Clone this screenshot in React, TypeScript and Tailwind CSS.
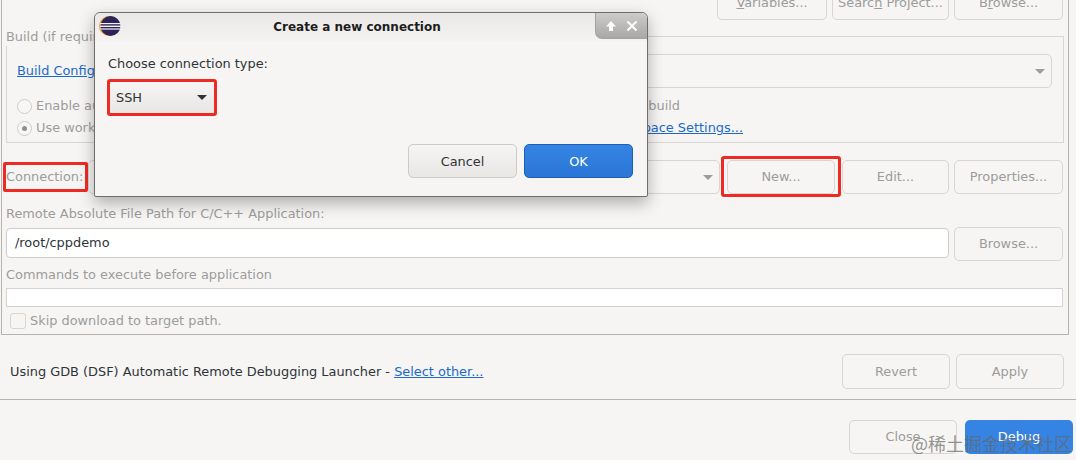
import React from "react";

// Disabled GTK style button from the launch configuration page
function Btn({ children, className = "" }: { children: React.ReactNode; className?: string }) {
  return (
    <div className={`relative flex items-center justify-center rounded-[5px] border border-[#d8d6d2] bg-[#f6f5f4] text-[#9c9c9a] ${className}`}>
      {children}
    </div>
  );
}

function Radio({ checked, label }: { checked?: boolean; label: string }) {
  return (
    <div className="flex h-[22px] items-center gap-[4px] text-[#9c9c9a]">
      <div className="flex h-[15px] w-[15px] items-center justify-center rounded-full border border-[#cfcdc9] bg-[#f8f7f6]">
        {checked && <div className="h-[5px] w-[5px] rounded-full bg-[#8f8f8d]" />}
      </div>
      <span>{label}</span>
    </div>
  );
}

function Caret({ className = "" }: { className?: string }) {
  return (
    <svg width="10" height="5" viewBox="0 0 10 5" className={className}>
      <path d="M0 0h10L5 5z" fill="currentColor" />
    </svg>
  );
}

function EclipseLogo() {
  return (
    <svg width="24" height="24" viewBox="0 0 24 24">
      <circle cx="11" cy="12" r="10" fill="#f0a04a" />
      <circle cx="12.5" cy="12" r="10" fill="#2c2358" />
      <rect x="2" y="9" width="21" height="1.2" fill="#f2f1f6" />
      <rect x="2" y="11.6" width="21" height="1.4" fill="#f2f1f6" />
      <rect x="2.5" y="14.4" width="20" height="1.2" fill="#f2f1f6" />
    </svg>
  );
}

function Dialog() {
  return (
    <div className="absolute left-[94px] top-[12px] flex h-[185px] w-[554px] flex-col rounded-t-[6px] rounded-b-[2px] border border-[#6e6e6c] bg-[#f6f5f4] shadow-[0_6px_16px_rgba(0,0,0,0.3)]">
      <div className="relative flex h-[28px] items-center justify-center rounded-t-[6px] bg-gradient-to-b from-[#e9e8e6] to-[#f4f3f1]">
        <div className="absolute left-[3px] top-[1px]">
          <EclipseLogo />
        </div>
        <span className="ml-[-28px] text-[12px] font-bold text-[#1d1d1d]">Create a new connection</span>
        <div className="absolute right-0 top-0 flex h-[26px] w-[52px] items-center justify-center gap-[9px] rounded-tr-[6px] rounded-bl-[7px] border-b border-l border-[#a3a3a1] bg-gradient-to-b from-[#cdccca] to-[#a9a8a6]">
          <svg width="12" height="12" viewBox="0 0 12 12">
            <path d="M6 1L11 6.5H8V11H4V6.5H1z" fill="#fbfbfb" />
          </svg>
          <svg width="12" height="12" viewBox="0 0 12 12">
            <path d="M1.5 1.5l9 9M10.5 1.5l-9 9" stroke="#fbfbfb" strokeWidth="2.2" />
          </svg>
        </div>
      </div>
      <div className="pl-[13px] pt-[13px] text-[#2e3436]">Choose connection type:</div>
      <div className="ml-[12px] mt-[6px] flex h-[37px] w-[110px] items-center justify-between rounded-[3px] border-[3px] border-[#ee2a24] bg-gradient-to-b from-[#f6f5f4] to-[#e9e7e4] pl-[6px] pr-[7px] text-[#2e3436]">
        <span>SSH</span>
        <Caret className="text-[#2e3436]" />
      </div>
      <div className="mt-[28px] flex justify-end gap-[7px] pr-[14px]">
        <div className="flex h-[34px] w-[109px] items-center justify-center rounded-[5px] border border-[#cdcbc7] bg-gradient-to-b from-[#f6f5f4] to-[#e9e7e4] text-[#2e3436]">
          Cancel
        </div>
        <div className="flex h-[34px] w-[109px] items-center justify-center rounded-[5px] border border-[#1b5fb8] bg-gradient-to-b from-[#3584e4] to-[#2a76d6] text-white">
          OK
        </div>
      </div>
    </div>
  );
}

export default function App() {
  return (
    <div className="relative h-[460px] w-[1076px] overflow-hidden bg-[#f6f5f4] font-['DejaVu_Sans',sans-serif] text-[12.9px] text-[#2e3436]">
      {/* Main tab panel */}
      <div className="ml-px h-[335px] w-[1068px] overflow-hidden border-b border-l border-r border-[#b5b3af] pl-[4px] pr-[5px]">
        <div className="mt-[-14px] flex h-[34px] justify-end gap-[5px]">
          <Btn className="w-[110px]"><span><u>V</u>ariables...</span></Btn>
          <Btn className="w-[117px]"><span>Searc<u>h</u> Project...</span></Btn>
          <Btn className="w-[109px]"><span>B<u>r</u>owse...</span></Btn>
        </div>

        <div className="relative mt-[16px] h-[107px] w-[1058px] border border-[#d8d6d2] pl-[10px] pr-[11px] pt-[17px]">
          <div className="absolute left-[-1px] top-[-10px] bg-[#f6f5f4] pr-1 text-[#9c9c9a]">Build (if required) before launching</div>
          <div className="flex h-[34px] items-center">
            <span className="w-[130px] text-[#1b6acb] underline">Build Configuration:</span>
            <div className="flex h-[34px] flex-1 items-center justify-end rounded-[5px] border border-[#d8d6d2] pr-[6px] text-[#9c9c9a]">
              <Caret />
            </div>
          </div>
          <div className="mt-[7px] flex justify-between pr-[372px]">
            <Radio label="Enable auto build" />
            <Radio label="Disable auto build" />
          </div>
          <div className="flex justify-between pr-[309px]">
            <Radio checked label="Use workspace settings" />
            <div className="flex h-[22px] items-center text-[#1b6acb] underline">Configure Workspace Settings...</div>
          </div>
        </div>

        <div className="mt-[17px] flex h-[34px] items-center">
          <div className="relative w-[82px] text-[#9c9c9a]">
            Connection:
            <span className="absolute bottom-[-5px] left-[-3px] right-0 top-[-5px] rounded-[2px] border-[3px] border-[#ee2a24]" />
          </div>
          <div className="flex h-[34px] w-[632px] items-center justify-end rounded-[5px] border border-[#d8d6d2] pr-[6px] text-[#9c9c9a]">
            <Caret />
          </div>
          <Btn className="ml-[7px] h-[34px] w-[108px]">
            New...
            <span className="absolute bottom-[-4px] left-[-7px] right-[-7px] top-[-5px] rounded-[3px] border-[3px] border-[#ee2a24]" />
          </Btn>
          <Btn className="ml-[7px] h-[34px] w-[107px]">Edit...</Btn>
          <Btn className="ml-[5px] h-[34px] w-[109px]">Properties...</Btn>
        </div>

        <div className="mt-[11px] flex h-[18px] items-center text-[#9c9c9a]">Remote Absolute File Path for C/C++ Application:</div>
        <div className="mt-[4px] flex h-[34px] justify-between">
          <div className="mt-[1px] flex h-[30px] w-[943px] items-center rounded-[4px] border border-[#cfcdc9] bg-white pl-[8px] text-[#2e3436]">/root/cppdemo</div>
          <Btn className="h-[34px] w-[109px]">Browse...</Btn>
        </div>
        <div className="mt-[5px] flex h-[18px] items-center text-[#9c9c9a]">Commands to execute before application</div>
        <div className="mt-[4px] h-[19px] w-[1057px] border border-[#d5d3cf] bg-white" />
        <div className="mt-[5px] flex h-[18px] items-center gap-[4px] pl-[4px] text-[#9c9c9a]">
          <div className="h-[16px] w-[16px] rounded-[3px] border border-[#d8d6d2] bg-[#f6f5f4]" />
          <span>Skip download to target path.</span>
        </div>
      </div>

      {/* Launcher row */}
      <div className="mt-[19px] flex h-[35px] items-center pl-[10px] pr-[12px]">
        <span>Using GDB (DSF) Automatic Remote Debugging Launcher - <span className="text-[#1b6acb] underline">Select other...</span></span>
        <Btn className="ml-auto h-[35px] w-[108px]">Revert</Btn>
        <Btn className="ml-[6px] h-[35px] w-[108px]">Apply</Btn>
      </div>
      <div className="mt-[10px] h-px w-full bg-[#b5b3af]" />

      {/* Dialog buttons */}
      <div className="mt-[20px] flex h-[34px] justify-end gap-[8px] pr-[3px]">
        <Btn className="h-[34px] w-[108px]">Close</Btn>
        <div className="flex h-[34px] w-[108px] items-center justify-center rounded-[5px] bg-[#3584e4] text-white">Debug</div>
      </div>

      <Dialog />

      {/* Site watermark over the footer buttons */}
      <div className="absolute left-[911px] top-[431px] whitespace-nowrap font-['Noto_Sans_CJK_SC',sans-serif] text-[18px] leading-[24px] text-[#666666]/70">
        @稀土掘金技术社区
      </div>
    </div>
  );
}
